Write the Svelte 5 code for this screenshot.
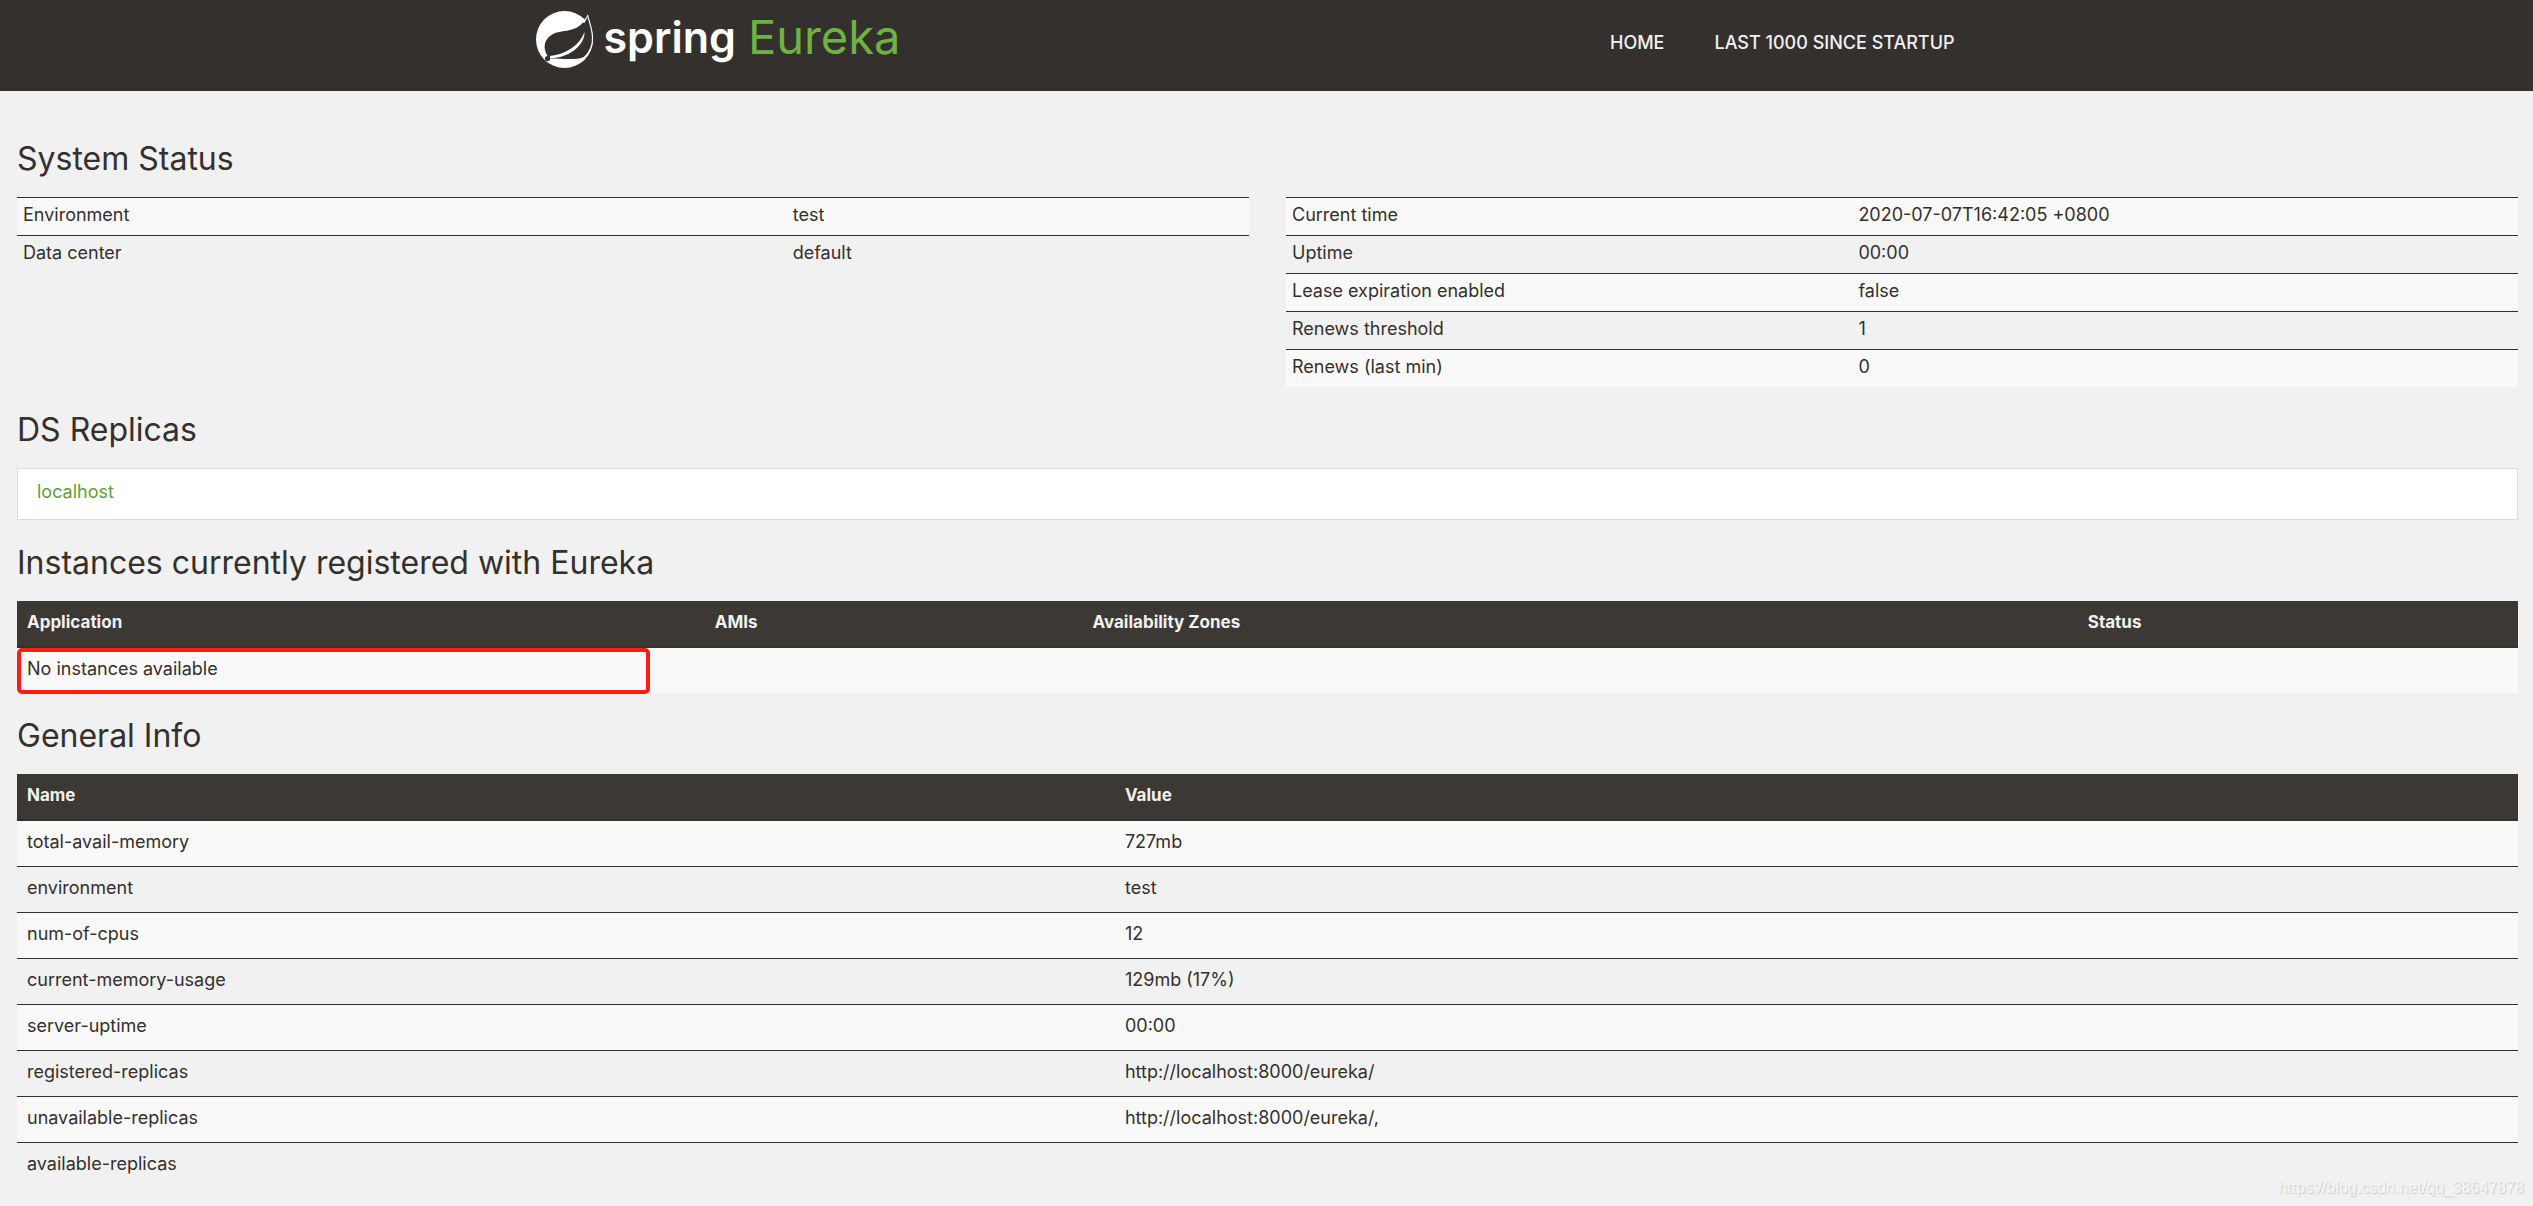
<script>
  const system = [
    ["Environment", "test"],
    ["Data center", "default"],
  ];

  const runtime = [
    ["Current time", "2020-07-07T16:42:05 +0800"],
    ["Uptime", "00:00"],
    ["Lease expiration enabled", "false"],
    ["Renews threshold", "1"],
    ["Renews (last min)", "0"],
  ];

  const general = [
    ["total-avail-memory", "727mb"],
    ["environment", "test"],
    ["num-of-cpus", "12"],
    ["current-memory-usage", "129mb (17%)"],
    ["server-uptime", "00:00"],
    ["registered-replicas", "http://localhost:8000/eureka/"],
    ["unavailable-replicas", "http://localhost:8000/eureka/,"],
    ["available-replicas", ""],
  ];
</script>

<nav class="navbar">
  <div class="navbar-inner">
    <a class="brand" href="/" aria-label="spring Eureka">
      <svg class="leaf" viewBox="0 0 58 58" aria-hidden="true">
        <circle cx="28.5" cy="28.5" r="28.5" fill="#fff" />
        <path
          d="M51.5 4 C48 12 43 17 34 19 C26 21 20 20 14 25 C8 30 7 37 11 44 L13 47.5 C28 48 42 49 48 46 C53 43 57 35 56.5 26 C56.300 18 53.500 12 51.500 4 Z"
          fill="#34302d"
        />
        <path
          d="M51.5 4 C53.500 12 56.300 18 56.500 26 C57 34 54 41 48 47"
          fill="none"
          stroke="#fff"
          stroke-width="1.2"
        />
        <path
          d="M52 3 C50 7 49 8 46 11 L48.500 12 C50 9 51 7 52 3 Z"
          fill="#fff"
        />
        <path
          d="M14 45 C30 43 43 35 48.500 21 C49 32 37 46 14 47.500 Z"
          fill="#fff"
        />
        <circle cx="11.5" cy="47.5" r="2.6" fill="#34302d" />
      </svg>
      <span class="spring">spring</span>
      <span class="eureka">Eureka</span>
    </a>
    <ul class="links">
      <li><a href="/">Home</a></li>
      <li><a href="/lastn">Last 1000 since startup</a></li>
    </ul>
  </div>
</nav>

<main class="container">
  <h1>System Status</h1>
  <div class="row">
    <table class="condensed system">
      <tbody>
        {#each system as [name, value]}
          <tr><td>{name}</td><td>{value}</td></tr>
        {/each}
      </tbody>
    </table>
    <table class="condensed runtime">
      <tbody>
        {#each runtime as [name, value]}
          <tr><td>{name}</td><td>{value}</td></tr>
        {/each}
      </tbody>
    </table>
  </div>

  <h1>DS Replicas</h1>
  <ul class="replicas">
    <li><a href="http://localhost:8000/eureka/">localhost</a></li>
  </ul>

  <h1>Instances currently registered with Eureka</h1>
  <table class="striped instances">
    <thead>
      <tr><th>Application</th><th>AMIs</th><th>Availability Zones</th><th>Status</th></tr>
    </thead>
    <tbody>
      <tr>
        <td class="empty" colspan="4">No instances available<span class="marker"></span></td>
      </tr>
    </tbody>
  </table>

  <h1>General Info</h1>
  <table class="striped general">
    <thead>
      <tr><th>Name</th><th>Value</th></tr>
    </thead>
    <tbody>
      {#each general as [name, value]}
        <tr><td>{name}</td><td>{value}</td></tr>
      {/each}
    </tbody>
  </table>
</main>

<div class="watermark">https://blog.csdn.net/qq_38647878</div>

<style>
  :global(body) {
    margin: 0;
    background-color: #f1f1f1;
    color: #34302d;
    font-family: Inter, sans-serif;
    font-size: 18px;
    line-height: 24px;
  }

  ul {
    list-style: none;
    margin: 0;
    padding: 0;
  }

  a {
    text-decoration: none;
  }

  .navbar {
    height: 91px;
    background-color: #34302d;
  }

  .navbar-inner {
    display: flex;
    justify-content: space-between;
    max-width: 1462px;
    margin: 0 auto;
  }

  .brand {
    display: flex;
    align-items: flex-start;
    padding-top: 11px;
    line-height: 52px;
  }

  .leaf {
    width: 58px;
    height: 58px;
    margin-right: 10px;
  }

  .spring {
    margin-right: 12px;
    color: #fff;
    font-size: 43px;
    font-weight: 600;
  }

  .eureka {
    color: #6db33f;
    font-size: 47px;
  }

  .links {
    display: flex;
    padding: 31px 18px 0 0;
  }

  .links a {
    padding: 0 25px;
    color: #f1f1f1;
    font-weight: 500;
    text-transform: uppercase;
  }

  .container {
    padding: 25px 15px 0 17px;
  }

  h1 {
    margin: 0;
    padding: 23px 0 18px;
    font-size: 32px;
    font-weight: 400;
    line-height: 40px;
  }

  .row {
    display: grid;
    grid-template-columns: 1fr 1fr;
    align-items: start;
    gap: 37px;
  }

  table {
    width: 100%;
    border-spacing: 0;
    table-layout: fixed;
  }

  th,
  td {
    text-align: left;
    vertical-align: top;
  }

  tbody tr:nth-child(odd) {
    background-color: #f9f9f9;
  }

  .condensed td {
    height: 24px;
    padding: 5px 6px 8px;
    border-top: 1px solid #34302d;
  }

  .system td:first-child {
    width: 61.5%;
  }

  .runtime td:first-child {
    width: 45%;
  }

  .striped th {
    padding: 9px 10px 12px;
    border-bottom: 2px solid #34302d;
    background-color: #3c3833;
    color: #f1f1f1;
    font-size: 17px;
    font-weight: 700;
  }

  .striped td {
    height: 24px;
    padding: 9px 10px 12px;
  }

  .striped tr + tr td {
    border-top: 1px solid #34302d;
  }

  .instances th:nth-child(1) {
    width: 26.7%;
  }

  .instances th:nth-child(2) {
    width: 14.3%;
  }

  .instances th:nth-child(3) {
    width: 39%;
  }

  .general th:first-child {
    width: 43.1%;
  }

  .replicas {
    padding: 11px 19px 15px;
    border: 1px solid #ddd;
    background-color: #fff;
  }

  .replicas a {
    color: #5fa134;
  }

  .empty {
    position: relative;
  }

  /* highlight drawn over the empty row */
  .marker {
    position: absolute;
    top: 0;
    left: 0;
    box-sizing: border-box;
    width: 25.3%;
    height: 46px;
    border: 4px solid #ff1d12;
    border-radius: 5px;
  }

  .watermark {
    position: absolute;
    right: 9px;
    bottom: 6px;
    color: #f6f6f6;
    font-family: "Liberation Sans", sans-serif;
    font-size: 16px;
    text-shadow: 1px 1px 1px #c8c8c8;
  }
</style>
